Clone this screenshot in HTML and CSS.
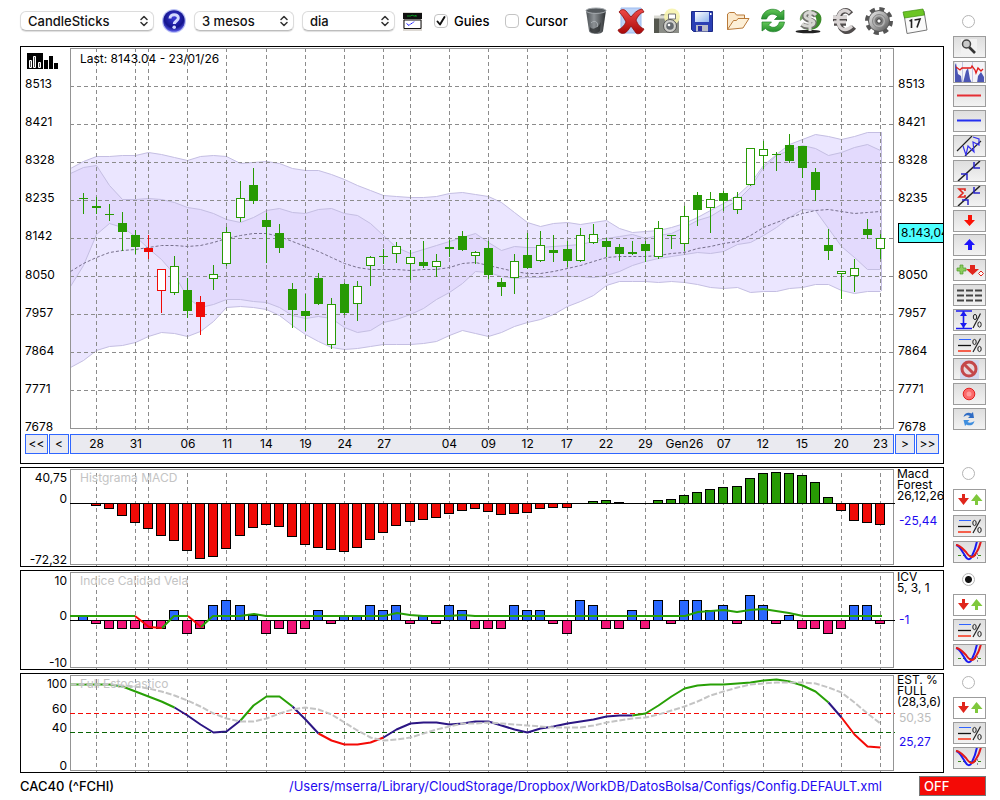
FILE: index.html
```html
<!DOCTYPE html>
<html lang="ca">
<head>
<meta charset="utf-8">
<meta name="viewport" content="width=device-width, initial-scale=1">
<title>CAC40 (^FCHI)</title>
<link rel="stylesheet" href="styles.css">
</head>
<body>
<svg class="sprite" aria-hidden="true">
  <defs>
    <radialGradient id="g-help" cx=".5" cy=".35" r=".65"><stop offset="0" stop-color="#3b3bd8"/><stop offset=".7" stop-color="#14148c"/><stop offset="1" stop-color="#5a5ae8"/></radialGradient>
    <linearGradient id="g-bin"><stop offset="0" stop-color="#4a4f53"/><stop offset=".4" stop-color="#8d9296"/><stop offset="1" stop-color="#2b2e30"/></linearGradient>
    <linearGradient id="g-red" y2="1" x2="0"><stop offset="0" stop-color="#f04a4a"/><stop offset="1" stop-color="#a80808"/></linearGradient>
    <linearGradient id="g-silver" x2="1" y2="1"><stop offset="0" stop-color="#eeeeee"/><stop offset=".5" stop-color="#a8a8a8"/><stop offset="1" stop-color="#4c4c4c"/></linearGradient>
    <linearGradient id="g-green" y2="1" x2="0"><stop offset="0" stop-color="#63c758"/><stop offset="1" stop-color="#238c2c"/></linearGradient>
    <linearGradient id="g-disk" x2="1" y2="1"><stop offset="0" stop-color="#ffffff"/><stop offset="1" stop-color="#8fb4ee"/></linearGradient>
  </defs>
  <symbol id="i-chevrons" viewBox="0 0 8 12"><path d="M1 4.500 4 1.500l3 3M1 7.500l3 3 3-3" fill="none" stroke="#333" stroke-width="1.500" stroke-linecap="round" stroke-linejoin="round"/></symbol>
  <symbol id="i-updown" viewBox="0 0 33 22"><path d="M9 5h3v4h4l-5.500 7L5 9h4z" fill="#e0261c"/><path d="M22 16h3v-4h4.500L23.500 5 18 12h4z" fill="#7fc83c"/></symbol>
  <symbol id="i-percent" viewBox="0 0 33 22"><path d="M6 5.500h12" stroke="#2f62ff" stroke-width="1"/><path d="M5 11.500h13" stroke="#111" stroke-width="1.300"/><path d="M5 17h13" stroke="#f4604c" stroke-width="2"/><g fill="none" stroke="#222"><path d="M27.500 4.500 20 18" stroke-width="1.200"/><ellipse cx="21.500" cy="8" rx="1.700" ry="2.600"/><ellipse cx="26.500" cy="15" rx="1.700" ry="2.600"/></g></symbol>
  <symbol id="i-cross" viewBox="0 0 33 22"><path d="M5 14.500h25" stroke="#3c8a1c" stroke-dasharray="3 2"/><path d="M24.500 12v8" stroke="#88a" stroke-dasharray="2 2"/><path d="M3 4c4 1 5 5 8 9 3 6 6 7 8 2 2-4 4-9 5-15" fill="none" stroke="#1c1cf0" stroke-width="2"/><path d="M3 4c4 0 7 4 10 7 4 6 7 7 10 1 3-4 4-8 5-12" fill="none" stroke="#e21c1c" stroke-width="2"/></symbol>
</svg>

<div class="page">
  <main class="work">
    <form class="toolbar">
      <span class="pick pick-wide"><select aria-label="Tipus de gràfic"><option>CandleSticks</option></select><svg><use href="#i-chevrons"/></svg></span>
      <button type="button" class="tool help" aria-label="Ajuda">
        <svg viewBox="0 0 24 24"><circle cx="12" cy="12" r="12" fill="#b9c0f4"/><circle cx="12" cy="12" r="10.800" fill="url(#g-help)"/><path d="M8 9.500C8 4.500 16.300 4.500 16.300 9c0 3-4 3-4 6" fill="none" stroke="#d4d9ff" stroke-width="3"/><circle cx="12.200" cy="18.300" r="1.800" fill="#d4d9ff"/></svg>
      </button>
      <span class="pick pick-mid"><select aria-label="Període"><option>3 mesos</option></select><svg><use href="#i-chevrons"/></svg></span>
      <span class="pick pick-small"><select aria-label="Interval"><option>dia</option></select><svg><use href="#i-chevrons"/></svg></span>
      <button type="button" class="tool mini" aria-label="Indicadors">
        <svg viewBox="0 0 19 19"><path d="M0 0h19v19H0z" fill="#ddd9d4"/><path d="M0 1h19v6H0z" fill="#111"/><path d="M4 4h4l1-1 2 1h1l1-1v2" stroke="#0a9a20" fill="none"/><path d="M1 8h17v8.500H1z" fill="#fff" stroke="#111"/><path d="M3.500 11.500 6 13.500l2-2h1l2-2" stroke="#22f" fill="none"/></svg>
      </button>
      <div class="checks">
        <label><span class="box"><input type="checkbox" checked><svg viewBox="0 0 14 14"><path d="m3.500 7.500 2.500 3 4.500-7.500" fill="none" stroke="#111" stroke-width="1.900" stroke-linecap="round" stroke-linejoin="round"/></svg></span>Guies</label>
        <label><span class="box"><input type="checkbox"></span>Cursor</label>
      </div>
      <div class="actions">
        <button type="button" class="tool" aria-label="Buidar">
          <svg viewBox="0 0 28 28"><path d="M4 3.500 7 24c1 4 13 4 14 0l3-20.500z" fill="url(#g-bin)"/><ellipse cx="14" cy="3.700" rx="10" ry="2.700" fill="#555a5e" stroke="#a6abaf"/><path d="M8 20c3 4 9 0 11-5l-1 9c-3 3-8 3-10 0z" fill="#25282a" opacity=".7"/><path d="M9 16c4-4 8 0 6 4" stroke="#aab0b4" fill="none"/></svg>
        </button>
        <button type="button" class="tool" aria-label="Esborrar">
          <svg viewBox="0 0 28 28"><path d="M4 1h20v25H4z" fill="#bcd3f8" stroke="#9dbcf0"/><path d="M2 5c2-3 5-3 7-1l5 6c3-4 6-7 11-8l2 3c-4 1-6 4-8 8 2 5 4 7 8 9-2 4-6 6-8 4l-5-7c-2 3-4 6-6 7-3 1-6 0-7-3 4-2 6-4 8-8-2-4-4-7-7-10z" fill="url(#g-red)" stroke="#8c0c0c" stroke-width=".800"/></svg>
        </button>
        <button type="button" class="tool" aria-label="Captura">
          <svg viewBox="0 0 28 28"><path d="M1 9h6l1-2h7l2 2h9v17H1z" fill="#8b8d87"/><path d="M1 9h5v17H1z" fill="#55574f"/><path d="M1 8.500h25v3H1z" fill="#d9d9d2"/><circle cx="19" cy="9.500" r="8" fill="#f6f3ae" opacity=".9"/><path d="M15.500 7h7v5h-7z" fill="#fff" stroke="#777"/><circle cx="17" cy="19" r="6.500" fill="#cfcfcb" stroke="#555"/><circle cx="17" cy="19" r="3.800" fill="#666b70"/><circle cx="16" cy="18" r="1.300" fill="#fff"/></svg>
        </button>
        <button type="button" class="tool" aria-label="Desar">
          <svg viewBox="0 0 28 28"><path d="M3.500 4.500h21v20h-19l-2-2z" fill="#2a3fb4" stroke="#1c2a86"/><path d="M7 5h14v10H7z" fill="url(#g-disk)"/><path d="M8 18h12v6.500H8z" fill="#b9bcc8"/><path d="M10 19h4v5h-4z" fill="#2a2fa0"/><path d="M22 6h1.500v2H22z" fill="#fff"/></svg>
        </button>
        <button type="button" class="tool" aria-label="Obrir">
          <svg viewBox="0 0 28 28"><path d="M3.500 22.500V7l2-1.500h5l2 2.500h8v4" fill="#fbe9cc" stroke="#b97a3a"/><path d="m3.500 22.500 6-9h3l1.500-2h11l-6 9.500z" fill="#fdf0d8" stroke="#b97a3a" stroke-linejoin="round"/></svg>
        </button>
        <button type="button" class="tool" aria-label="Actualitzar">
          <svg viewBox="0 0 28 28"><path d="M2.500 12C4 1 17 0 21.500 5.500L25 3v9.500h-9.500l3-3c-3-3.500-9-3.500-11 2.500z" fill="url(#g-green)" stroke="#1f7f28" stroke-width=".700"/><path d="M25.500 15C24 26 11 27 6.500 21.500L3 24v-9h9.500l-3 3c3 3.500 9 3.500 11-3z" fill="url(#g-green)" stroke="#1f7f28" stroke-width=".700"/></svg>
        </button>
        <button type="button" class="tool" aria-label="Dòlar">
          <svg viewBox="0 0 28 28"><ellipse cx="13" cy="24.500" rx="12.500" ry="1.800" fill="#222"/><path d="M15 3c9 0 13 6 11 12s-7 8-12 8l-7-2 9-2c6-1 7-7 3-11z" fill="#3d8c2c"/><path d="M5 14C4 8 8 4 14 3l2 3-6 4z" fill="#79a568"/><path d="M21 8.500c-4-4-12-3-11 1.500 1 4 9 2.500 9 6s-8 5-12 1.500" fill="none" stroke="#70706c" stroke-width="5.500"/><path d="M21 8c-4-4-12-3-11 1.500 1 4 9 2.500 9 6s-8 5-12 1.500M15 3v21" fill="none" stroke="#d6d6d2" stroke-width="3"/></svg>
        </button>
        <button type="button" class="tool" aria-label="Euro">
          <svg viewBox="0 0 28 28"><path d="M21 7C16 1 8 4 9 14s8 14 15 6M3 11.500h14M4 16h12" fill="none" stroke="#504c4c" stroke-width="5.500"/><path d="M20 6C15 1 8 4 8 13s7 13 14 6M3 10.500h14M4 15h12" fill="none" stroke="#d9d4d4" stroke-width="3.200"/></svg>
        </button>
        <button type="button" class="tool" aria-label="Configuració">
          <svg viewBox="0 0 28 28"><circle cx="14" cy="14" r="12" fill="none" stroke="#555" stroke-width="4" stroke-dasharray="5 4.420"/><circle cx="14" cy="14" r="10.500" fill="url(#g-silver)" stroke="#555"/><circle cx="14" cy="14" r="6.500" fill="#b2b2b2" stroke="#888"/><circle cx="14" cy="14" r="4.500" fill="#7c7c7c"/><circle cx="14" cy="14" r="2.200" fill="#fff" stroke="#333"/></svg>
        </button>
        <button type="button" class="tool" aria-label="Calendari">
          <svg viewBox="0 0 28 28"><path d="m3 7 20-3 3 19-20 3.500z" fill="#fafafa" stroke="#777"/><path d="m2 5 20-3 1.500 6L3.500 11z" fill="#6cc524" stroke="#3f8f10" stroke-width=".700"/><path d="m8.500 14 2-1v8m3-8 5.500-1-3 8.500" fill="none" stroke="#222" stroke-width="1.600"/></svg>
        </button>
      </div>
    </form>

    <section class="panel price">
      <svg class="logo" viewBox="0 0 31 16"><path d="M0 0h16v16H0z"/><path d="M2.500 7.500h2v7h-2zM6.500 3.500h2v11h-2zM11.500 9.500h2v5h-2z" fill="#555" stroke="#fff"/><path d="M17 7h4v9h-4zM22 3h4v13h-4zM27 10h4v6h-4z"/></svg>
      <div class="scale"><span>8513</span><span>8421</span><span>8328</span><span>8235</span><span>8142</span><span>8050</span><span>7957</span><span>7864</span><span>7771</span><span>7678</span></div>
      <div class="plot"><h1 class="caption">Last: 8143.04 - 23/01/26</h1><svg id="price" viewBox="70 48 824 381" preserveAspectRatio="none"></svg></div>
      <div class="scale"><span>8513</span><span>8421</span><span>8328</span><span>8235</span><span></span><span>8050</span><span>7957</span><span>7864</span><span>7771</span><span>7678</span></div>
      <output class="tag">8.143,04</output>
      <div class="nav"><button type="button">&lt;&lt;</button><button type="button">&lt;</button></div>
      <div class="dates" id="dates"></div>
      <div class="nav nav-next"><button type="button">&gt;</button><button type="button">&gt;&gt;</button></div>
    </section>

    <section class="panel macd">
      <div class="axis"><span>40,75</span><span>0</span><span>-72,32</span></div>
      <div class="plot"><h2 class="caption">Histgrama MACD</h2><svg id="macd" viewBox="70 469 824 96" preserveAspectRatio="none"></svg></div>
      <div class="info"><p>Macd<br>Forest<br>26,12,26</p><span class="value">-25,44</span></div>
    </section>

    <section class="panel icv">
      <div class="axis"><span>10</span><span>0</span><span>-10</span></div>
      <div class="plot"><h2 class="caption">Indice Calidad Vela</h2><svg id="icv" viewBox="70 572 824 96" preserveAspectRatio="none"></svg></div>
      <div class="info"><p>ICV<br>5, 3, 1</p><span class="value">-1</span></div>
    </section>

    <section class="panel est">
      <div class="axis"><span>100</span><span>60</span><span>40</span><span>0</span></div>
      <div class="plot"><h2 class="caption">Full Estocastico</h2><svg id="est" viewBox="70 675 824 96" preserveAspectRatio="none"></svg></div>
      <div class="info"><p>EST. %<br>FULL<br>(28,3,6)</p><span class="muted">50,35</span><span class="value">25,27</span></div>
    </section>
  </main>

  <aside class="side">
    <div class="group group-main">
      <input type="radio" name="panel" aria-label="Preu">
      <button type="button" aria-label="Lupa"><svg viewBox="0 0 33 22"><path d="M8 3h16v16H8z" fill="#f1f1f1"/><path d="m16 11 6 6" stroke="#333" stroke-width="2.600"/><circle cx="13.500" cy="8" r="4" fill="#c9c9c9" stroke="#444" stroke-width="1.500"/></svg></button>
      <button type="button" aria-label="Volum"><svg viewBox="0 0 33 22"><path d="M2 0h29v22H2z" fill="#f4f4f8"/><path d="M2 22V4l1-2 2 11 3 2 1 7zm8 0 1-4 2-8 2-3 2 11 2 4zm14 0 1-7 3-4 3 5v6z" fill="#4c56b4"/><path d="M9.500 0v22M19.500 0v22" stroke="#c3c6e2"/><path d="m3 6 4 3 2-2h9l1-2 3 4 1 3 2-5 3 3 2-2" fill="none" stroke="#e21c1c" stroke-width="1.300"/></svg></button>
      <button type="button" aria-label="Línia vermella"><svg viewBox="0 0 33 22"><path d="M4 10.500h24" stroke="#e52f34" stroke-width="2"/></svg></button>
      <button type="button" aria-label="Línia blava"><svg viewBox="0 0 33 22"><path d="M4 10.500h24" stroke="#2530f0" stroke-width="2"/></svg></button>
      <button type="button" aria-label="Canal"><svg viewBox="0 0 33 22"><path d="M4 16 19 1M12 21 28 6" stroke="#222" stroke-width="1.200"/><path d="m10 11 3 9 2-9 6 6-1-10 6 3V4l-6-2" fill="none" stroke="#3430f0" stroke-width="1.200"/></svg></button>
      <button type="button" aria-label="Tendència"><svg viewBox="0 0 33 22"><path d="M5 21 27 1" stroke="#222" stroke-width="1.500"/><path d="M8 14h6v6M27 8h-6V2" fill="none" stroke="#2a26c8" stroke-width="1.500"/></svg></button>
      <button type="button" aria-label="Regressió"><svg viewBox="0 0 33 22"><path d="M5 21 27 1" stroke="#222" stroke-width="1.500"/><path d="M9 15h6v5M27 8h-6V2" fill="none" stroke="#2a26c8" stroke-width="1.500"/><path d="M12 6V4H6l4 4-4 4h6v-2" fill="none" stroke="#e0261c" stroke-width="1.600"/></svg></button>
      <button type="button" aria-label="Marca vermella"><svg viewBox="0 0 33 22"><path d="M15 5h4v5h3l-5.500 6L11 10h4z" fill="#fb1206"/></svg></button>
      <button type="button" aria-label="Marca blava"><svg viewBox="0 0 33 22"><path d="M15 16h4v-5h3l-5.500-6L11 11h4z" fill="#1d14fb"/></svg></button>
      <button type="button" aria-label="Afegir marca"><svg viewBox="0 0 33 22"><path d="M7 6h3v3h3v3h-3v3H7v-3H4V9h3z" fill="#8ccc5c" stroke="#4c9c2c" stroke-width=".700"/><path d="M17 6h5v4h4l-6.500 6L13 10h4z" fill="#e0261c"/><path d="m28 12 2.500 2.500L28 17l-2.500-2.500z" fill="#fff" stroke="#e0261c"/></svg></button>
      <button type="button" aria-label="Línies discontínues"><svg viewBox="0 0 33 22"><path d="M4 6.500h26M4 11.500h26M4 16.500h26" stroke="#444" stroke-width="2" stroke-dasharray="7 2"/></svg></button>
      <button type="button" aria-label="Rang percentual"><svg viewBox="0 0 33 22"><path d="M3 2h16M3 19.500h16M10.500 2v17" stroke="#1c1cf0" stroke-width="1.600"/><path d="M10.500 2 7 7h7zM10.500 19 7 14h7z" fill="#1c1cf0"/><g fill="none" stroke="#222"><path d="M27.500 4.500 20 19" stroke-width="1.200"/><ellipse cx="22" cy="8" rx="1.700" ry="2.600"/><ellipse cx="26.500" cy="15.500" rx="1.700" ry="2.600"/></g></svg></button>
      <button type="button" aria-label="Nivells percentuals"><svg><use href="#i-percent"/></svg></button>
      <button type="button" aria-label="Prohibit"><svg viewBox="0 0 33 22"><path d="M7 2h19v19H7z" fill="#d3d8ee"/><circle cx="16" cy="11" r="7" fill="#e6d6dc" stroke="#c4474b" stroke-width="3"/><path d="m11 6 10 10" stroke="#c4474b" stroke-width="3"/></svg></button>
      <button type="button" aria-label="Gravar"><svg viewBox="0 0 33 22"><circle cx="16" cy="11" r="5.800" fill="#fb6a6a" stroke="#e22020"/><circle cx="16" cy="11" r="2.500" fill="#ff9c9c"/></svg></button>
      <button type="button" aria-label="Recarregar"><svg viewBox="0 0 33 22"><path d="M10.500 9c1-5 6-5 8-3.500L20 4l1 6h-6l2-2c-2-1-4-1-6.500 1z" fill="#2f6cc4"/><path d="M21.500 13c-1 5-6 5-8 3.500L12 18l-1.500-6h6l-2 2c2 1 4 1 7-1z" fill="#3f8ede"/></svg></button>
    </div>
    <div class="group group-first">
      <input type="radio" name="panel" aria-label="MACD">
      <button type="button" class="plain" aria-label="Moure"><svg><use href="#i-updown"/></svg></button>
      <button type="button" aria-label="Nivells"><svg><use href="#i-percent"/></svg></button>
      <button type="button" aria-label="Creuaments"><svg><use href="#i-cross"/></svg></button>
    </div>
    <div class="group">
      <input type="radio" name="panel" aria-label="ICV" checked>
      <button type="button" class="plain" aria-label="Moure"><svg><use href="#i-updown"/></svg></button>
      <button type="button" aria-label="Nivells"><svg><use href="#i-percent"/></svg></button>
      <button type="button" aria-label="Creuaments"><svg><use href="#i-cross"/></svg></button>
    </div>
    <div class="group">
      <input type="radio" name="panel" aria-label="Estocàstic">
      <button type="button" class="plain" aria-label="Moure"><svg><use href="#i-updown"/></svg></button>
      <button type="button" aria-label="Nivells"><svg><use href="#i-percent"/></svg></button>
      <button type="button" aria-label="Creuaments"><svg><use href="#i-cross"/></svg></button>
    </div>
  </aside>

  <footer class="status">
    <span>CAC40 (^FCHI)</span>
    <a href="#config">/Users/mserra/Library/CloudStorage/Dropbox/WorkDB/DatosBolsa/Configs/Config.DEFAULT.xml</a>
    <button type="button" class="off">OFF</button>
  </footer>
</div>
<script src="charts.js"></script>
</body>
</html>
```
FILE: styles.css
```css
* { box-sizing: border-box; }

body {
  margin: 0;
  background: #fff;
  color: #000;
  font: 12px/14px Inter, "Liberation Sans", sans-serif;
}

h1, h2, p { margin: 0; font: inherit; }
button { padding: 0; font: inherit; color: inherit; }
.sprite { position: absolute; width: 0; height: 0; }

.page {
  display: grid;
  grid-template-columns: minmax(0, 1fr) 33px;
  column-gap: 9px;
  padding: 0 14px 0 20px;
}

/* toolbar */
.toolbar {
  display: flex;
  align-items: center;
  gap: 8px;
  height: 46px;
  padding: 0 15px 4px 0;
  font-size: 13px;
  font-weight: 500;
}
.pick { position: relative; height: 20px; }
.pick select {
  appearance: none;
  width: 100%;
  height: 20px;
  padding: 0 20px 0 7px;
  border: 1px solid #dcdcdc;
  border-bottom-color: #bdbdbd;
  border-radius: 6px;
  background: #fff;
  box-shadow: 0 1px 1px #0002;
  color: #111;
  font: inherit;
}
.pick svg { position: absolute; top: 4px; right: 6px; width: 8px; height: 12px; pointer-events: none; }
.pick-wide { width: 134px; }
.pick-mid { width: 100px; }
.pick-small { width: 93px; }

.tool { flex: none; width: 28px; height: 28px; border: 0; background: none; }
.tool svg { display: block; width: 100%; height: 100%; }
.help { width: 24px; height: 24px; }
.mini { width: 19px; height: 19px; }

.checks { display: flex; gap: 16px; margin-left: 4px; }
.checks label { display: flex; align-items: center; gap: 6px; }
.box { position: relative; width: 14px; height: 14px; }
.box input {
  appearance: none;
  display: block;
  width: 14px;
  height: 14px;
  margin: 0;
  border: 1px solid #c4c4c4;
  border-radius: 4px;
  background: #fff;
}
.box svg { position: absolute; inset: 0; pointer-events: none; }
.actions { display: flex; flex: 1; justify-content: space-between; margin-left: 6px; }

/* chart panels */
.panel {
  position: relative;
  display: grid;
  grid-template-columns: 49px minmax(0, 1fr) 49px;
  margin-bottom: 3px;
  border: 1px solid #000;
  overflow: hidden;
}
.plot { position: relative; margin: 1px 0; }
.plot svg { display: block; width: 100%; height: 96px; overflow: visible; }
.caption { position: absolute; top: 2px; left: 10px; color: #c4c4c4; }

.price { padding-bottom: 9px; }
.price .plot { margin-bottom: 5px; }
.price .plot svg { height: 381px; }
.price .caption { top: 4px; color: #000; }
.logo { position: absolute; top: 6px; left: 6px; width: 31px; height: 16px; }
.scale { display: flex; flex-direction: column; justify-content: space-between; padding: 30px 0 0 4px; }
.scale span { min-height: 14px; }
.tag {
  position: absolute;
  top: 176px;
  right: -4px;
  width: 49px;
  height: 20px;
  padding: 2px;
  border: 1px solid #000;
  background: #4dffff;
}

.nav { display: grid; grid-template-columns: 23px 20px; gap: 1px; padding-left: 4px; }
.nav-next { grid-template-columns: 20px 23px; padding-left: 1px; }
.nav button { border: 1px solid #2f66ff; background: #eaeaf0; }
.dates {
  display: grid;
  grid-template-columns: repeat(62, minmax(0, 1fr));
  align-items: center;
  height: 20px;
  padding: 0 6px;
  border: 1px solid #2f66ff;
  background: #eaeaf0;
}
.dates span { justify-self: center; }

.axis { display: grid; padding: 4px 3px 0 0; line-height: 12px; text-align: right; }
.macd .axis { grid-template-rows: 21px 1fr 12px; }
.icv .axis { grid-template-rows: 35px 1fr 12px; }
.est .axis { grid-template-rows: 25px 19px 1fr 12px; }

.info { padding-left: 3px; line-height: 11px; white-space: nowrap; }
.info span { display: block; padding-left: 2px; line-height: 12px; }
.info .value { color: #1e0af0; }
.muted { margin-top: 5px; color: #bdbdbd; }
.macd .value { margin-top: 14px; }
.icv .value { margin-top: 21px; }
.est .value { margin-top: 12px; }

/* side tools */
.side { display: flex; flex-direction: column; }
.group {
  display: flex;
  flex-direction: column;
  justify-content: space-between;
  height: 103px;
  padding: 3px 0 7px;
}
.group-main { height: 467px; padding: 15px 0 37px; }
.group-first { padding: 0 0 7px; }
.group input {
  appearance: none;
  flex: none;
  width: 13px;
  height: 13px;
  margin: 0 0 5px 9px;
  border: 1px solid #b4b4b4;
  border-radius: 50%;
  background: #fff;
}
.group input:checked { background: radial-gradient(circle, #111 0 3px, #fff 4px); }
.group button {
  height: 22px;
  border: 1px solid #9c9c9c;
  background: linear-gradient(#dedede, #f2f2f2);
  overflow: hidden;
}
.group .plain { background: #fff; }
.group svg { display: block; width: 33px; height: 22px; margin: -1px; }

/* chart marks */
.frame { fill: none; stroke: #949494; }
.guide { fill: none; stroke: #8c8c8c; stroke-dasharray: 4 3; }
.band-outer { fill: #ebe6ff; }
.band-inner { fill: #e3dafd; }
.edge { fill: none; stroke: #c4bee2; }
.mean { fill: none; stroke: #77708c; stroke-dasharray: 3 2; }
.up { fill: #289a04; stroke: #289a04; }
.down { fill: #f00a06; stroke: #f00a06; }
.hollow { fill: #fff; }
.bar { stroke: #000; }
.bar-green { fill: #289a04; }
.bar-red { fill: #f00a06; }
.bar-blue { fill: #2a68ff; }
.bar-pink { fill: #f21478; }
.zero { stroke: #000; }
.line { fill: none; stroke-width: 2; stroke-linejoin: round; }
.line-green { stroke: #28a006; }
.line-red { stroke: #f40a06; }
.line-indigo { stroke: #2c1684; }
.line-slow { stroke: #c4c4c4; stroke-dasharray: 6 2; }
.limit { stroke-dasharray: 5 3; }
.limit-high { stroke: #f40a06; }
.limit-low { stroke: #0a6404; }
.crisp { shape-rendering: crispEdges; }

/* status bar */
.status {
  grid-column: 1 / -1;
  display: flex;
  align-items: center;
  height: 20px;
  font-size: 13px;
  font-weight: 500;
}
.status a { margin: 0 37px 0 auto; color: #1e0af0; font-weight: 400; text-decoration: none; }
.off {
  width: 67px;
  height: 20px;
  padding-left: 4px;
  border: 1px solid #777;
  background: #f40a06;
  color: #fff;
  text-align: left;
}
```
FILE: charts.js
```js
const NS = "http://www.w3.org/2000/svg";
const LEFT = 70, RIGHT = 893;

// Horizontal centre of session i
const cx = i => 83 + 13 * i + Math.floor((i + 1) / 12.6);

function add(svg, tag, cls, attrs) {
  const el = document.createElementNS(NS, tag);
  el.setAttribute("class", cls);
  for (const k in attrs) el.setAttribute(k, attrs[k]);
  svg.append(el);
}
const rule = (svg, cls, x1, y1, x2, y2) => add(svg, "line", cls + " crisp", { x1, y1, x2, y2 });
const points = (ys, from = -1) => ys.map((y, k) => `${cx(from + k) + .5},${y + .5}`);
const poly = (svg, cls, pts) => add(svg, "polyline", cls, { points: pts.join(" ") });

const DATES = [[1, "28"], [4, "31"], [5, ""], [8, "06"], [11, "11"], [14, "14"], [17, "19"], [20, "24"], [23, "27"], [25, ""],
  [28, "04"], [31, "09"], [34, "12"], [37, "17"], [40, "22"], [43, "29"], [46, "Gen26"], [49, "07"], [52, "12"], [55, "15"], [58, "20"], [61, "23"]];

function guides(svg, top, bottom) {
  for (const [i] of DATES) rule(svg, "guide", cx(i) + .5, top, cx(i) + .5, bottom + 2);
}
function frame(svg, top, height) {
  add(svg, "rect", "frame crisp", { x: LEFT + .5, y: top + .5, width: 823, height: height - 1 });
}

const dates = document.getElementById("dates");
for (const [i, text] of DATES) {
  if (!text) continue;
  const s = document.createElement("span");
  s.textContent = text;
  s.style.gridColumn = i + 1;
  dates.append(s);
}

// Bands
const outerTop = [168,161,156,156,155,155,152,154,157,160,156,155,156,163,162,161,163,168,170,170,174,179,185,190,195,196,197,197,196,193,192,194,196,202,212,222,226,223,222,224,222,220,228,232,231,230,227,223,217,210,203,195,183,165,154,144,139,134,136,139,136,132,132];
const innerTop = [173,167,165,185,199,199,198,199,202,207,209,213,219,222,217,210,208,212,213,209,208,213,215,223,235,247,253,249,245,241,237,233,242,250,246,247,247,246,245,244,241,238,236,234,238,235,233,227,220,216,208,200,187,167,155,150,145,148,155,152,147,144,150];
const innerLow = [286,265,234,223,227,236,248,259,274,297,307,304,299,299,301,302,307,315,318,316,318,327,332,330,322,319,314,308,299,292,283,271,272,276,278,277,277,276,276,276,277,275,271,265,261,258,256,254,252,253,251,244,242,235,227,217,209,210,228,246,257,269,269];
const outerLow = [367,360,350,346,345,342,336,332,333,336,331,321,307,306,307,309,315,325,334,341,347,349,348,346,344,344,344,343,341,335,330,333,336,332,326,322,319,314,306,301,295,285,281,281,281,282,281,282,284,287,288,287,292,291,291,288,287,284,284,290,293,291,291];
const mean = [271,263,257,252,250,249,247,245,245,246,245,242,238,235,233,233,236,241,246,251,257,263,267,269,269,269,270,269,269,267,263,262,265,268,271,273,273,271,268,265,261,257,256,256,256,255,253,252,248,246,243,241,235,227,222,217,213,210,209,211,213,212,211];

// Sessions: colour (capital = hollow), high, body top, body bottom, low
const CANDLES = `g193,198,199,214 g197,206,208,214 g204,214,215,221 g212,223,232,251 g230,235,247,254 r235,248,252,259
R269,269,291,313 G256,266,293,295 g278,290,311,318 r296,302,317,335 G265,274,279,290 G227,232,264,266 G181,198,218,222
g168,185,201,204 g213,220,227,263 g224,233,248,253 g283,289,310,328 g294,311,316,331 g273,278,304,305 G298,304,345,349
g283,284,313,315 G281,286,304,321 G256,257,266,286 g249,256,257,264 G242,246,254,263 G250,257,264,280 g241,262,266,268
G254,261,267,277 g240,247,249,257 g231,236,250,251 G251,252,256,264 g241,248,275,279 g278,282,287,296 G254,261,278,294
g233,255,268,269 G231,245,261,262 g235,250,253,262 g241,249,261,267 G228,235,261,262 G224,234,243,244 g238,241,247,257
g244,247,254,261 g241,252,254,255 g241,244,251,262 G221,228,257,259 g235,235,236,249 G206,216,244,251 g192,195,210,226
G192,199,208,233 g191,193,201,211 G192,197,210,214 G148,148,185,186 G141,149,156,169 g152,154,155,171 g134,145,161,163
g146,146,168,178 g168,172,190,201 g229,245,251,260 G271,271,274,299 G259,268,276,292 g219,229,235,239 G234,238,249,259`.split(/\s+/);

const price = document.getElementById("price");
const closed = (a, b) => [...points(a), ...points(b).reverse()].join(" ");
add(price, "polygon", "band-outer", { points: closed(outerTop, outerLow) });
add(price, "polygon", "band-inner", { points: closed(innerTop, innerLow) });
for (const b of [outerTop, innerTop, innerLow, outerLow]) poly(price, "edge", points(b));
rule(price, "edge", 881.5, 132, 881.5, 291);
guides(price, 48, 429);
for (let k = 0; k < 9; k++) rule(price, "guide", LEFT, 86.5 + 38 * k, RIGHT + 3, 86.5 + 38 * k);
frame(price, 48, 381);
poly(price, "mean", points(mean));
CANDLES.forEach((c, i) => {
  const kind = c[0], [high, top, bottom, low] = c.slice(1).split(",").map(Number);
  const cls = /g/i.test(kind) ? "up" : "down";
  rule(price, cls, cx(i) + .5, high, cx(i) + .5, low);
  add(price, "rect", `${cls} crisp${/[GR]/.test(kind) ? " hollow" : ""}`,
    { x: cx(i) - 3.5, y: top + .5, width: 8, height: Math.max(bottom - top - 1, .01) });
});

// MACD histogram, pixels above (+) or below (-) the zero line
const MACD = [0,-2,-5,-12,-19,-25,-32,-37,-47,-55,-53,-45,-32,-24,-21,-23,-33,-41,-44,-46,-48,-44,-36,-29,-22,-18,-16,-14,-10,-7,-5,-8,-11,-10,-9,-5,-4,-4,0,2,3,1,0,0,3,4,8,11,14,16,17,25,30,31,30,28,21,6,-7,-17,-19,-21];
function bars(svg, values, zero, plus, minus) {
  values.forEach((v, i) => {
    if (!v) return;
    add(svg, "rect", `bar crisp ${v > 0 ? plus : minus}`,
      { x: cx(i) - 4.5, y: (v > 0 ? zero - v : zero) + .5, width: 9, height: Math.abs(v) });
  });
  rule(svg, "zero", LEFT, zero + .5, RIGHT + 2, zero + .5);
}
const macd = document.getElementById("macd");
guides(macd, 473, 565);
frame(macd, 469, 96);
bars(macd, MACD, 503, "bar-green", "bar-red");

// Candle quality index
const ICV = [1,-1,-2,-2,-2,-2,-2,2,-3,-2,3,4,3,1,-3,-2,-3,-2,2,-1,1,1,3,2,3,-1,1,-1,3,2,-2,-2,-2,3,2,2,-1,-3,4,3,-2,-2,2,-2,4,-1,4,4,2,3,-1,5,3,-1,1,-2,-2,-3,-2,3,3,-1];
const icv = document.getElementById("icv");
guides(icv, 576, 668);
frame(icv, 572, 96);
bars(icv, ICV.map(v => v > 0 ? v * 5 : v < 0 ? v * 5 + 2 : 0), 620, "bar-blue", "bar-pink");
poly(icv, "line line-green", ["70,616", "135,616"]);
poly(icv, "line line-red", ["135,616", "149,627", "162,628"]);
poly(icv, "line line-green", ["162,628", "174,616", "188,616"]);
poly(icv, "line line-red", ["188,616", "201,627"]);
poly(icv, "line line-green", ["201,627", "213,616", "240,616", "254,614", "266,616", "384,616", "397,613", "410,615", "423,616", "449,616", "462,615", "475,616", "685,616", "698,612", "711,611", "724,610", "737,612", "750,610", "763,609", "776,611", "789,613", "803,616", "882,616"]);

// Stochastic
const FAST = [684,684,684,684,686,691,696,701,707,715,724,732,731,720,705,696,696,706,719,733,740,744,744,742,737,729,723,722,722,724,723,721,721,725,729,732,728,726,723,721,719,716,715,715,713,705,696,688,685,684,684,683,682,680,679,681,685,691,702,717,734,746,747];
const SLOW = [684,684,684,684,685,686,688,691,695,700,706,713,718,721,721,718,713,709,707,709,714,722,730,737,740,739,737,733,729,726,723,723,722,723,724,725,726,727,727,727,725,722,720,718,717,714,710,706,701,695,691,687,684,683,682,682,682,683,687,692,702,713,723];
const RUNS = [[-1, 7, "green"], [7, 12, "indigo"], [12, 16, "green"], [16, 18, "indigo"], [18, 23, "red"], [23, 42, "indigo"], [42, 57, "green"], [57, 58, "indigo"], [58, 61, "red"]];
const est = document.getElementById("est");
guides(est, 679, 771);
frame(est, 675, 96);
rule(est, "limit limit-high", LEFT, 713.5, RIGHT + 2, 713.5);
rule(est, "limit limit-low", LEFT, 732.5, RIGHT + 2, 732.5);
for (const [a, b, colour] of RUNS) poly(est, `line line-${colour}`, points(FAST.slice(a + 1, b + 2), a));
poly(est, "line line-slow", points(SLOW));
```
